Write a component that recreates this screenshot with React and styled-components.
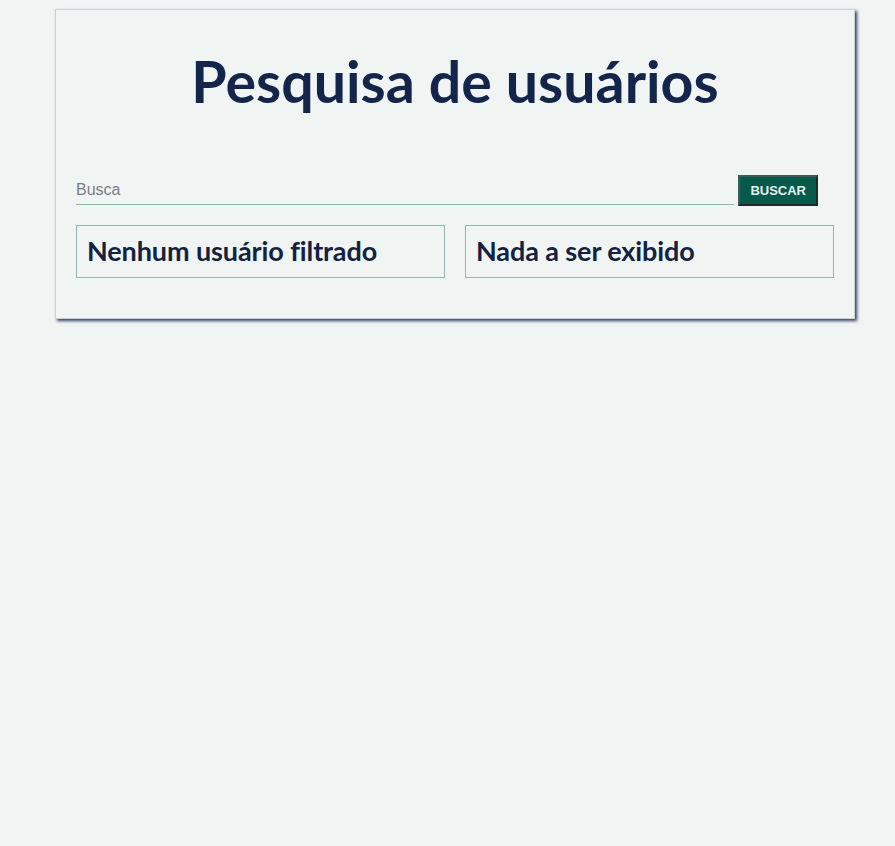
import styled, { createGlobalStyle } from "styled-components";

const GlobalStyle = createGlobalStyle`
  html, body {
    margin: 0;
    padding: 0;
    background-color: #f0f5f4;
  }

  body {
    font-family: "Liberation Sans", Arial, sans-serif;
  }
`;

const Page = styled.div`
  min-height: 100vh;
  box-sizing: border-box;
  padding: 9px 0 0 55px;
`;

const Card = styled.main`
  width: 800px;
  box-sizing: border-box;
  padding: 0 20px 40px 20px;
  border: 1px solid #c5d5d6;
  box-shadow: 2px 2px 3px rgba(28, 44, 80, 0.9);
  background-color: #f0f5f4;
`;

const Title = styled.h1`
  margin: 0;
  padding: 39px 0 62px;
  text-align: center;
  font-family: "Lato", "Open Sans", sans-serif;
  font-weight: 700;
  font-size: 57.3px;
  line-height: 64px;
  color: #13254a;
`;

const SearchRow = styled.form`
  display: flex;
  align-items: flex-end;
  gap: 4px;
  padding-right: 16px;
`;

const SearchInput = styled.input`
  flex: 1;
  height: 28px;
  padding: 0;
  border: none;
  border-bottom: 1px solid #8fb3ad;
  background: transparent;
  font-family: "Liberation Sans", Arial, sans-serif;
  font-size: 16px;
  color: #333;
  outline: none;

  &::placeholder {
    color: #7a7d7f;
  }
`;

const SearchButton = styled.button`
  height: 31px;
  padding: 0 10px;
  margin-bottom: -1px;
  border: 2px solid;
  border-color: #3d5c58 #1c2a2a #1c2a2a #3d5c58;
  background-color: #055a4a;
  color: #e8f0ef;
  font-family: "Liberation Sans", Arial, sans-serif;
  font-weight: 700;
  font-size: 13px;
`;

const Results = styled.section`
  display: grid;
  grid-template-columns: 1fr 1fr;
  gap: 20px;
  margin-top: 20px;
`;

const Panel = styled.div`
  border: 1px solid #93b6b0;
  padding: 0 10px 3px;
  height: 53px;
  box-sizing: border-box;
  display: flex;
  align-items: center;
`;

const PanelTitle = styled.h2`
  margin: 0;
  font-family: "Lato", "Open Sans", sans-serif;
  font-weight: 700;
  font-size: 27px;
  letter-spacing: -0.1px;
  color: #14213f;
`;

export default function App() {
  return (
    <>
      <GlobalStyle />
      <Page>
        <Card>
          <Title>Pesquisa de usuários</Title>
          <SearchRow onSubmit={(e) => e.preventDefault()}>
            <SearchInput type="text" placeholder="Busca" />
            <SearchButton type="submit">BUSCAR</SearchButton>
          </SearchRow>
          <Results>
            <Panel>
              <PanelTitle>Nenhum usuário filtrado</PanelTitle>
            </Panel>
            <Panel>
              <PanelTitle>Nada a ser exibido</PanelTitle>
            </Panel>
          </Results>
        </Card>
      </Page>
    </>
  );
}
